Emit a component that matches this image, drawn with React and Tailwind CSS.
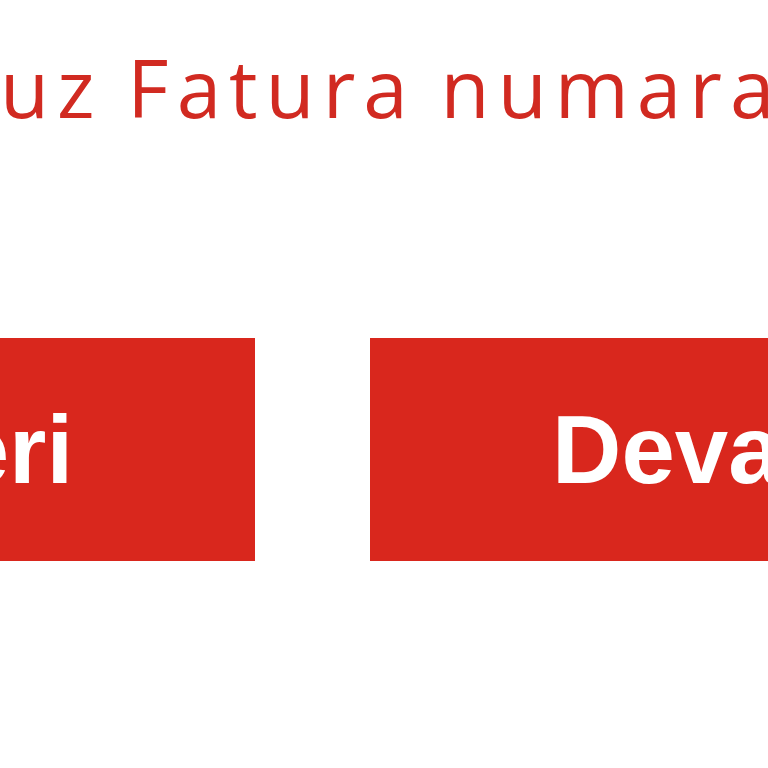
import React from "react";

const btnClass =
	"h-[223px] shrink-0 flex items-center px-[182px] bg-[#d9271d] text-white font-bold text-[96px] leading-none whitespace-nowrap";

function App() {
	return (
		<div className="w-[768px] h-[768px] overflow-hidden bg-white" style={{ fontFamily: '"Liberation Sans", Arial, sans-serif' }}>
			<p
				className="pt-[37px] flex whitespace-nowrap text-[#d12a21] text-[80px] leading-[100px] tracking-[8px] [word-spacing:-4px] font-medium"
				style={{ fontFamily: '"Open Sans", sans-serif' }}
			>
				<span className="w-0 flex justify-end">Borcun</span>
				<span>uz Fatura numarası</span>
			</p>
			<div className="mt-[201px] flex gap-[115px] ml-[-301px]">
				<button className={btnClass}>Geri</button>
				<button className={btnClass}>Devam</button>
			</div>
		</div>
	);
}

export default App;
